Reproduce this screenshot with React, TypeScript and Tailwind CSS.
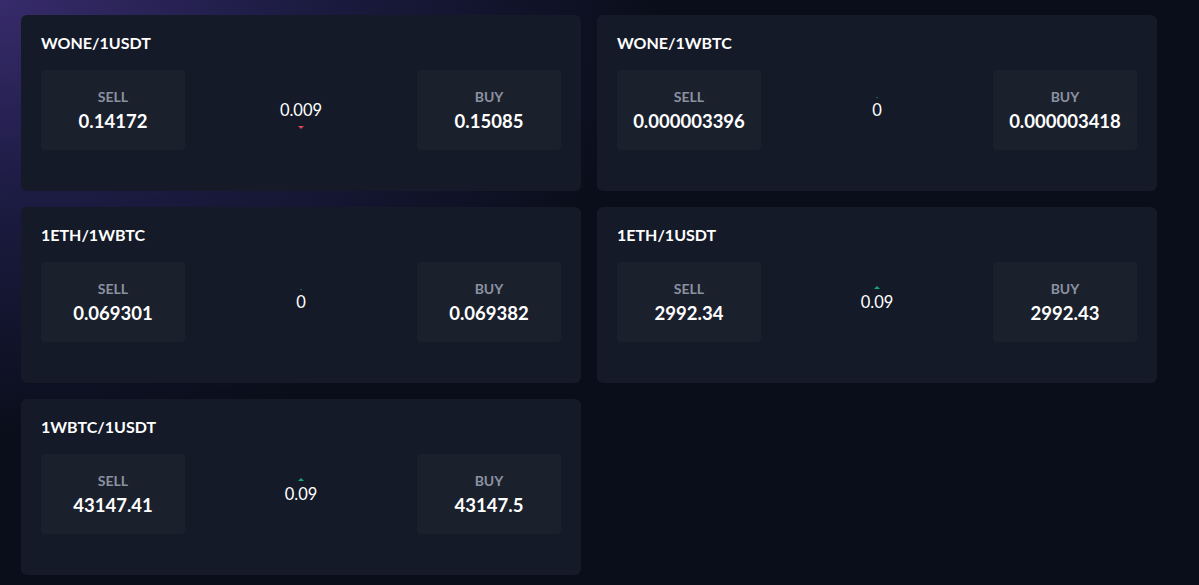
import React from "react";

type Pair = {
  name: string;
  sell: string;
  buy: string;
  change: string;
  dir: "up" | "down" | "flat";
};

const pairs: Pair[] = [
  { name: "WONE/1USDT", sell: "0.14172", buy: "0.15085", change: "0.009", dir: "down" },
  { name: "WONE/1WBTC", sell: "0.000003396", buy: "0.000003418", change: "0", dir: "flat" },
  { name: "1ETH/1WBTC", sell: "0.069301", buy: "0.069382", change: "0", dir: "flat" },
  { name: "1ETH/1USDT", sell: "2992.34", buy: "2992.43", change: "0.09", dir: "up" },
  { name: "1WBTC/1USDT", sell: "43147.41", buy: "43147.5", change: "0.09", dir: "up" },
];

function PriceBox({ label, value }: { label: string; value: string }) {
  return (
    <div className="w-[144px] h-[80px] rounded-[4px] bg-[#1b202d] flex flex-col items-center justify-center">
      <span className="text-[14px] font-bold text-[#8a92a0] leading-[17px]">{label}</span>
      <span className="text-[18.5px] font-bold text-white leading-[24px] mt-[4px]">{value}</span>
    </div>
  );
}

function Change({ value, dir }: { value: string; dir: Pair["dir"] }) {
  return (
    <div className="relative flex flex-col items-center">
      {dir === "up" && (
        <span className="absolute left-1/2 -translate-x-1/2 top-[-6px] w-0 h-0 border-l-[3px] border-r-[3px] border-b-[3px] border-l-transparent border-r-transparent border-b-[#16a37a]" />
      )}
      {dir === "flat" && (
        <span className="absolute left-1/2 -translate-x-1/2 top-[-3px] w-[2px] h-[1px] bg-[#1d5c4f]" />
      )}
      <span className="text-[16.5px] text-white leading-[20px]">{value}</span>
      {dir === "down" && (
        <span className="absolute left-1/2 -translate-x-1/2 bottom-[-9px] w-0 h-0 border-l-[3px] border-r-[3px] border-t-[3px] border-l-transparent border-r-transparent border-t-[#e0464b]" />
      )}
    </div>
  );
}

function PairCard({ pair }: { pair: Pair }) {
  return (
    <div className="h-[176px] rounded-[6px] bg-[#151a28] px-[20px] pt-[18px]">
      <h2 className="text-[16px] font-bold text-white leading-[19px]">{pair.name}</h2>
      <div className="flex items-center justify-between mt-[18px]">
        <PriceBox label="SELL" value={pair.sell} />
        <Change value={pair.change} dir={pair.dir} />
        <PriceBox label="BUY" value={pair.buy} />
      </div>
    </div>
  );
}

export default function App() {
  return (
    <div
      className="min-h-screen bg-[#0a0e1a] bg-[radial-gradient(ellipse_55%_75%_at_0%_0%,#372b6b_0%,#1c1b42_45%,#0a0e1a_100%)] pl-[21px] pt-[15px] pb-[10px]"
      style={{ fontFamily: "Lato, 'Noto Sans', sans-serif" }}
    >
      <div className="grid grid-cols-[560px_560px] gap-[16px]">
        {pairs.map((p) => (
          <PairCard key={p.name} pair={p} />
        ))}
      </div>
    </div>
  );
}
